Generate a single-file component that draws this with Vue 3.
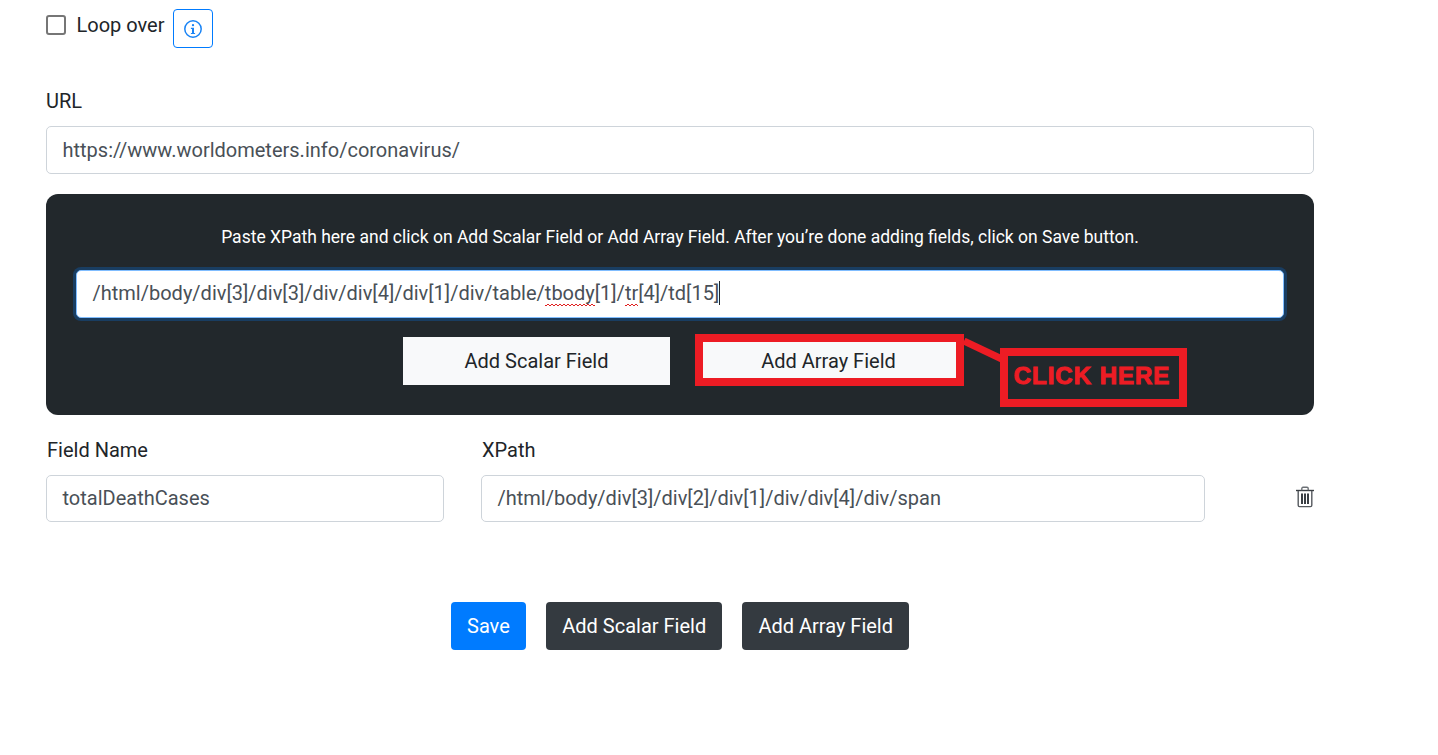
<template>
  <div class="page">
    <div class="loop-row">
      <span class="checkbox"></span>
      <span class="loop-label">Loop over</span>
      <button class="info-btn" type="button">
        <svg width="18" height="18" viewBox="0 0 18 18">
          <circle cx="9" cy="9" r="8.2" fill="none" stroke="#1a84f5" stroke-width="1.5" />
          <circle cx="9" cy="5.2" r="1.15" fill="#1a84f5" />
          <path d="M6.9 7.7h3.1v5.2h1.1v1.2H6.9v-1.2h1.1V8.9H6.9z" fill="#1a84f5" />
        </svg>
      </button>
    </div>

    <label class="url-label">URL</label>
    <div class="input url-input">https://www.worldometers.info/coronavirus/</div>

    <section class="panel">
      <p class="panel-hint">Paste XPath here and click on Add Scalar Field or Add Array Field. After you’re done adding fields, click on Save button.</p>
      <div class="xpath-input">
        <span>/html/body/div[3]/div[3]/div/div[4]/div[1]/div/table/<span class="misspelled">tbody</span>[1]/<span class="misspelled">tr</span>[4]/td[15]</span><span class="caret"></span>
      </div>
      <div class="panel-actions">
        <button class="light-btn" type="button">Add Scalar Field</button>
        <button class="light-btn" type="button">Add Array Field</button>
        <div class="array-outline"></div>
        <svg class="connector" width="50" height="30" viewBox="0 0 50 30">
          <line x1="2" y1="3" x2="44" y2="23" stroke="#ed1c24" stroke-width="7" />
        </svg>
        <div class="click-here">CLICK HERE</div>
      </div>
    </section>

    <div class="field-row">
      <div class="col-name">
        <label class="field-label">Field Name</label>
        <div class="input">totalDeathCases</div>
      </div>
      <div class="col-xpath">
        <label class="field-label">XPath</label>
        <div class="input">/html/body/div[3]/div[2]/div[1]/div/div[4]/div/span</div>
      </div>
      <svg class="trash" width="20" height="22" viewBox="-1 0 20 22">
        <path d="M1 4.5h18" fill="none" stroke="#3a3f44" stroke-width="1.4" />
        <path d="M6.8 4.2V2.6c0-.8.5-1.3 1.2-1.3h4c.7 0 1.2.5 1.2 1.3v1.6" fill="none" stroke="#6c7176" stroke-width="1.4" />
        <path d="M3.2 5v14.2c0 .9.5 1.4 1.3 1.4h11c.8 0 1.3-.5 1.3-1.4V5" fill="none" stroke="#55595e" stroke-width="1.4" />
        <path d="M6 7.5h2v10.5H6zM9 7.5h2v10.5H9zM12 7.5h2v10.5h-2z" fill="#3a3f44" />
      </svg>
    </div>

    <div class="footer-actions">
      <button class="btn primary" type="button">Save</button>
      <button class="btn dark scalar" type="button">Add Scalar Field</button>
      <button class="btn dark wide" type="button">Add Array Field</button>
    </div>
  </div>
</template>

<script setup>
</script>

<style>
html, body { background: #fff; }
</style>

<style scoped>
.page {
  box-sizing: border-box;
  width: 1438px;
  height: 755px;
  padding: 10px 124px 0 46px;
  font-family: Roboto, "Liberation Sans", sans-serif;
  font-size: 20px;
  line-height: 30px;
  color: #212529;
  overflow: hidden;
}
.loop-row { display: flex; align-items: flex-start; height: 38px; }
.checkbox {
  box-sizing: border-box;
  width: 20px; height: 20px;
  margin-top: 5px;
  border: 2px solid #767676;
  border-radius: 3px;
}
.loop-label { margin-left: 10.5px; }
.info-btn {
  box-sizing: border-box;
  width: 40px; height: 39px;
  margin: -1px 0 0 9px;
  padding: 0;
  display: flex; align-items: center; justify-content: center;
  background: #fff;
  border: 1px solid #007bff;
  border-radius: 4px;
}
.url-label { display: block; margin-top: 38px; }
.input {
  box-sizing: border-box;
  height: 47px;
  padding: 7px 15.5px 8px;
  border: 1px solid #ced4da;
  border-radius: 5px;
  color: #495057;
  background: #fff;
  white-space: nowrap;
}
.url-input { height: 48px; margin-top: 10px; padding-top: 8px; }
.panel {
  box-sizing: border-box;
  height: 221px;
  margin-top: 20px;
  padding: 28px 30px 0;
  background: #22282c;
  border-radius: 12px;
  color: #fff;
}
.panel-hint {
  margin: 0;
  font-size: 17.5px;
  line-height: 30px;
  text-align: center;
}
.xpath-input {
  box-sizing: border-box;
  height: 48px;
  margin-top: 18px;
  padding: 7px 15.5px 8px;
  display: flex;
  background: #fff;
  color: #495057;
  border: 1px solid #80bdff;
  border-radius: 5px;
  box-shadow: 0 0 0 3px rgba(0, 123, 255, .25);
  white-space: nowrap;
}
.misspelled {
  padding-bottom: 1px;
  background-image:
    linear-gradient(135deg, transparent 35%, #e02020 35%, #e02020 65%, transparent 65%),
    linear-gradient(45deg, transparent 35%, #e02020 35%, #e02020 65%, transparent 65%);
  background-size: 4px 2px;
  background-position: 0 100%, 2px 100%;
  background-repeat: repeat-x;
}
.caret { display: inline-block; width: 1px; height: 24px; margin: 3px 0 0 0; background: #212529; }
.panel-actions {
  position: relative;
  display: flex;
  gap: 25px;
  margin: 19px 0 0 327px;
}
.light-btn {
  box-sizing: border-box;
  width: 267px; height: 48px;
  padding: 0;
  border: none;
  background: #f8f9fa;
  color: #212529;
  font: inherit;
}
.array-outline {
  position: absolute;
  left: 292px; top: -3px;
  box-sizing: border-box;
  width: 269px; height: 52px;
  border: 8px solid #ed1c24;
}
.connector { position: absolute; left: 559px; top: 1px; }
.click-here {
  position: absolute;
  left: 597px; top: 11px;
  box-sizing: border-box;
  width: 187px; height: 59px;
  padding: 0 3px 3px 0;
  border: 8px solid #ed1c24;
  display: flex; align-items: center; justify-content: center;
  color: #ed1c24;
  font-family: "Liberation Sans", sans-serif;
  font-weight: 700;
  font-size: 24px;
  letter-spacing: 1px;
  -webkit-text-stroke: 1px #ed1c24;
  white-space: nowrap;
}
.field-row { position: relative; display: flex; margin-top: 20px; }
.field-label { display: block; margin-left: 1px; }
.col-name { flex: none; width: 398px; }
.col-name .input, .col-xpath .input { margin-top: 10px; }
.col-xpath { flex: none; width: 724px; margin-left: 37px; }
.trash { flex: none; margin: 51px 0 0 89px; width: 20px; height: 22px; }
.footer-actions {
  display: flex;
  gap: 20px;
  margin: 80px 0 0 405px;
}
.btn {
  box-sizing: border-box;
  height: 48px;
  padding: 0 16px;
  border: none;
  border-radius: 4px;
  color: #fff;
  font: inherit;
}
.primary { background: #007bff; }
.dark { background: #343a40; }
.scalar { padding: 0 15.5px 0 16.5px; }
.wide { width: 167px; padding: 0 0 0 1px; }
</style>
